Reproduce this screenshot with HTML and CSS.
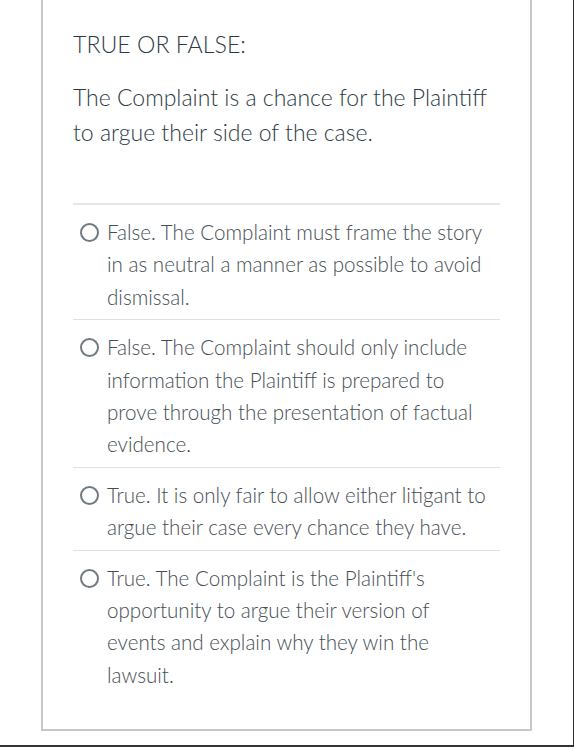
FILE: index.html
```html
<!DOCTYPE html>
<html lang="en">
<head>
<meta charset="utf-8">
<title>True or False</title>
<link rel="stylesheet" href="styles.css">
</head>
<body>
<div class="frame">
  <div class="card">
    <div class="question">
      <p class="title">TRUE OR FALSE:</p>
      <p class="prompt">The Complaint is a chance for the Plaintiff to argue their side of the case.</p>
    </div>
    <ul class="answers">
      <li class="answer"><span class="radio"></span><span class="label">False. The Complaint must frame the story in as neutral a manner as possible to avoid dismissal.</span></li>
      <li class="answer"><span class="radio"></span><span class="label">False. The Complaint should only include information the Plaintiff is prepared to prove through the presentation of factual evidence.</span></li>
      <li class="answer"><span class="radio"></span><span class="label">True. It is only fair to allow either litigant to argue their case every chance they have.</span></li>
      <li class="answer"><span class="radio"></span><span class="label">True. The Complaint is the Plaintiff's opportunity to argue their version of events and explain why they win the lawsuit.</span></li>
    </ul>
  </div>
</div>
</body>
</html>
```

FILE: styles.css
```css
html, body {
  margin: 0;
  padding: 0;
  background: #ffffff;
}

body {
  font-family: Lato, "Noto Sans", sans-serif;
  font-weight: 300;
  color: #2d3b45;
}

.frame {
  box-sizing: border-box;
  width: 574px;
  height: 747px;
  border-right: 1px solid #333333;
  border-bottom: 2px solid #333333;
  padding-left: 41px;
  overflow: hidden;
}

.card {
  box-sizing: border-box;
  width: 491px;
  border: 2px solid #c7c7c7;
  border-top: none;
  padding: 0 30px 32px 30px;
}

.question {
  padding-top: 27px;
  padding-bottom: 53px;
}

.title {
  margin: 0 0 18px 0;
  font-size: 23.2px;
  line-height: 35px;
}

.prompt {
  margin: 0;
  font-size: 23px;
  line-height: 35px;
}

.answers {
  list-style: none;
  margin: 0;
  padding: 0;
}

.answer {
  display: flex;
  align-items: flex-start;
  gap: 8px;
  border-top: 1px solid #dfe1e3;
  padding: 11px 10px 6px 7px;
  font-size: 20.6px;
  line-height: 32.4px;
  color: #454e55;
}

.answer:first-child {
  border-top: 2px solid #e4e6e8;
}

.radio {
  flex: none;
  box-sizing: border-box;
  width: 19px;
  height: 19px;
  margin-top: 7px;
  border: 2px solid #6f7a82;
  border-radius: 50%;
}

.label {
  flex: 1;
}
```
